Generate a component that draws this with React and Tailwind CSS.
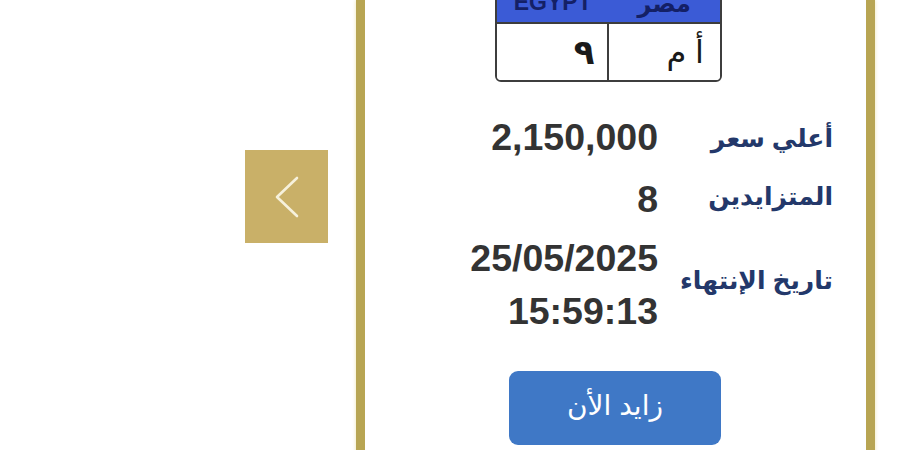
import React from "react";

const FONT = { fontFamily: '"Liberation Sans", "DejaVu Sans", Arial, sans-serif' };

function Row({ value, label, valueH = "h-[52px]", labelCls = "" }) {
  return (
    <div className="flex items-center">
      <div className="w-[293px] flex flex-col items-end">
        {value.map((v) => (
          <div key={v} className={`${valueH} flex items-center text-[37.5px] font-bold leading-none text-[#333333]`}>
            {v}
          </div>
        ))}
      </div>
      <div dir="rtl" className={`w-[175px] text-right text-[25px] font-bold text-[#23386a] leading-none ${labelCls}`}>
        {label}
      </div>
    </div>
  );
}

export default function App() {
  return (
    <div className="w-[900px] h-[450px] overflow-hidden bg-white flex" style={FONT}>
      <div className="ml-[245px] mt-[150px] w-[83px] h-[93px] bg-[#c9b068] flex items-center justify-center shrink-0">
        <svg width="30" height="44" viewBox="0 0 30 44" fill="none">
          <path d="M25 3 L5 22 L25 41" stroke="#f6f1dc" strokeWidth="2.6" strokeLinecap="round" strokeLinejoin="round" />
        </svg>
      </div>
      <div className="ml-[28px] w-[519px] h-[470px] border-x-[9px] border-[#b8a553] shadow-[0_0_4px_#efe6b4] bg-white shrink-0 flex flex-col">
        <div className="ml-[130px] -mt-[18px] w-[227px] border-2 border-[#3d3d3d] rounded-b-[6px] overflow-hidden">
          <div className="h-[38px] bg-[#3b5bd6] flex">
            <div className="w-1/2 flex items-end justify-center pb-[8px] text-[23px] font-bold text-[#142066] leading-none">
              EGYPT
            </div>
            <div dir="rtl" className="w-1/2 flex items-end justify-center pb-[6px] text-[24px] font-bold text-[#142066] leading-none">
              مصر
            </div>
          </div>
          <div className="h-[58px] flex border-t-2 border-[#3d3d3d] bg-white">
            <div dir="rtl" className="w-1/2 border-r-2 border-[#3d3d3d] flex items-center pr-[12px] text-[34px] font-bold text-[#1a1a1a] leading-none">
              ٩
            </div>
            <div dir="rtl" className="w-1/2 flex items-center pr-[16px] text-[32px] text-[#1a1a1a] leading-none" style={{ letterSpacing: "6px" }}>
              أ م
            </div>
          </div>
        </div>
        <div className="mt-[30px] flex flex-col">
          <Row value={["2,150,000"]} label="أعلي سعر" />
          <div className="h-[10px]" />
          <Row value={["8"]} label="المتزايدين" labelCls="mb-[8px]" />
          <div className="h-[6px]" />
          <Row value={["25/05/2025", "15:59:13"]} label="تاريخ الإنتهاء" valueH="h-[53px]" labelCls="mb-[10px]" />
        </div>
        <div className="ml-[144px] mt-[33px] w-[212px] h-[74px] rounded-[9px] bg-[#3f78c6] flex items-center justify-center">
          <span dir="rtl" className="text-[28px] text-white leading-none mb-[4px]">زايد الأن</span>
        </div>
      </div>
    </div>
  );
}
